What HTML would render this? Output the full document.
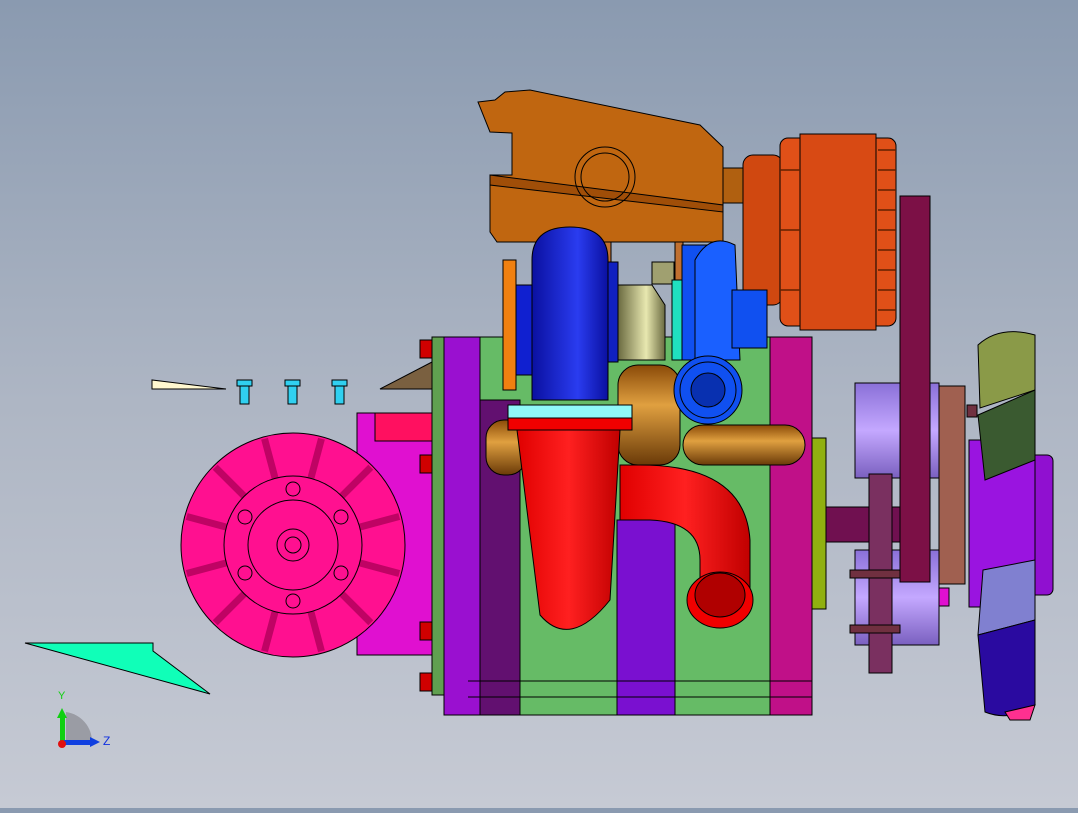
<!DOCTYPE html>
<html><head><style>html,body{margin:0;padding:0}body{width:1078px;height:808px;overflow:hidden;background:linear-gradient(#8a9ab0,#aeb6c4 50%,#c6cad4);font-family:"Liberation Sans",sans-serif}</style></head>
<body>
<svg width="1078" height="808" viewBox="0 0 1078 808" xmlns="http://www.w3.org/2000/svg" stroke="#000" stroke-width="1">
<defs>
<linearGradient id="bl" x1="0" x2="1"><stop offset="0" stop-color="#0a10a0"/><stop offset=".6" stop-color="#2a3cf0"/><stop offset="1" stop-color="#0a10a0"/></linearGradient>
<linearGradient id="rd" x1="0" x2="1"><stop offset="0" stop-color="#e00000"/><stop offset=".5" stop-color="#ff2020"/><stop offset="1" stop-color="#c00000"/></linearGradient>
<linearGradient id="br" x1="0" y1="0" x2="0" y2="1"><stop offset="0" stop-color="#8a4a08"/><stop offset=".4" stop-color="#e0a040"/><stop offset="1" stop-color="#6a3a08"/></linearGradient>
<linearGradient id="lv" x1="0" y1="0" x2="0" y2="1"><stop offset="0" stop-color="#8a70d8"/><stop offset=".5" stop-color="#c4a8ff"/><stop offset="1" stop-color="#7a60c0"/></linearGradient>
<linearGradient id="ol" x1="0" x2="1"><stop offset="0" stop-color="#6a6a40"/><stop offset=".6" stop-color="#e8e8b0"/><stop offset="1" stop-color="#6a6a40"/></linearGradient>
</defs>
<!-- small parts left -->
<polygon points="152,380 152,389 226,389" fill="#fff8d0"/>
<polygon points="380,389 432,362 432,389" fill="#7a6040"/>
<g fill="#30d0f0"><rect x="237" y="380" width="15" height="6"/><rect x="240" y="386" width="9" height="18"/><rect x="285" y="380" width="15" height="6"/><rect x="288" y="386" width="9" height="18"/><rect x="332" y="380" width="15" height="6"/><rect x="335" y="386" width="9" height="18"/></g>
<polygon points="25,643 153,643 153,651 210,694" fill="#10ffb8"/>
<!-- magenta box + pulley -->
<rect x="357" y="413" width="76" height="242" fill="#e010d0"/>
<rect x="375" y="413" width="58" height="28" fill="#ff1060"/>
<circle cx="293" cy="545" r="112" fill="#ff1090"/>
<g stroke="#b0005a" stroke-width="7" opacity=".8">
<line x1="293" y1="476" x2="293" y2="435" transform="rotate(15 293 545)"/><line x1="293" y1="476" x2="293" y2="435" transform="rotate(45 293 545)"/><line x1="293" y1="476" x2="293" y2="435" transform="rotate(75 293 545)"/><line x1="293" y1="476" x2="293" y2="435" transform="rotate(105 293 545)"/><line x1="293" y1="476" x2="293" y2="435" transform="rotate(135 293 545)"/><line x1="293" y1="476" x2="293" y2="435" transform="rotate(165 293 545)"/><line x1="293" y1="476" x2="293" y2="435" transform="rotate(195 293 545)"/><line x1="293" y1="476" x2="293" y2="435" transform="rotate(225 293 545)"/><line x1="293" y1="476" x2="293" y2="435" transform="rotate(255 293 545)"/><line x1="293" y1="476" x2="293" y2="435" transform="rotate(285 293 545)"/><line x1="293" y1="476" x2="293" y2="435" transform="rotate(315 293 545)"/><line x1="293" y1="476" x2="293" y2="435" transform="rotate(345 293 545)"/>
</g>
<circle cx="293" cy="545" r="69" fill="#ff1090"/>
<g fill="none"><circle cx="293" cy="545" r="45"/><circle cx="293" cy="545" r="16"/><circle cx="293" cy="545" r="8"/>
<circle cx="293" cy="489" r="7"/><circle cx="293" cy="601" r="7"/><circle cx="245" cy="517" r="7"/><circle cx="341" cy="517" r="7"/><circle cx="245" cy="573" r="7"/><circle cx="341" cy="573" r="7"/></g>
<!-- engine block -->
<rect x="468" y="337" width="344" height="378" fill="#66bb66"/>
<rect x="444" y="337" width="36" height="378" fill="#9a10d0"/>
<rect x="480" y="400" width="40" height="315" fill="#621070"/>
<rect x="617" y="520" width="58" height="195" fill="#7a10d0"/>
<rect x="770" y="337" width="42" height="378" fill="#c01088"/>
<rect x="812" y="438" width="14" height="171" fill="#90b010"/>
<rect x="432" y="337" width="12" height="358" fill="#60a050"/>
<line x1="468" y1="681" x2="812" y2="681"/><line x1="468" y1="697" x2="812" y2="697"/>
<g fill="#d00000"><rect x="420" y="340" width="12" height="18"/><rect x="420" y="455" width="12" height="18"/><rect x="420" y="622" width="12" height="18"/><rect x="420" y="673" width="12" height="18"/></g>
<!-- shaft, pulleys, belt -->
<rect x="826" y="507" width="80" height="35" fill="#701050"/>
<rect x="855" y="383" width="84" height="95" fill="url(#lv)"/>
<rect x="939" y="386" width="26" height="198" fill="#a06050"/>
<rect x="855" y="550" width="84" height="95" fill="url(#lv)"/>
<rect x="869" y="474" width="23" height="199" fill="#7a3060"/>
<rect x="900" y="196" width="30" height="386" fill="#7c1046"/>
<g fill="#703040"><rect x="850" y="570" width="50" height="8"/><rect x="850" y="625" width="50" height="8"/><rect x="967" y="405" width="10" height="12"/></g>
<rect x="939" y="588" width="10" height="18" fill="#e010d0"/>
<!-- fan -->
<rect x="1028" y="455" width="25" height="140" rx="6" fill="#9010d0"/>
<rect x="969" y="440" width="66" height="167" fill="#9a14e0"/>
<path d="M978,345 Q1000,325 1035,335 L1035,390 L980,408 Z" fill="#8a9a48"/>
<path d="M978,415 L1035,390 L1035,460 L985,480 Z" fill="#3a5a30"/>
<path d="M983,570 L1035,560 L1035,620 L978,635 Z" fill="#8080d0"/>
<path d="M978,635 L1035,620 L1035,705 Q1010,722 985,712 Z" fill="#2a0aa0"/>
<path d="M1005,712 L1035,705 L1030,720 L1010,720Z" fill="#ff3090"/>
<!-- intake manifold -->
<path d="M478,102 L495,100 L505,92 L530,90 L700,125 L723,147 L723,242 L497,242 L490,232 L490,175 L512,175 L512,133 L490,132 Z" fill="#c06610"/>
<path d="M490,175 L723,205 L723,212 L490,185 Z" fill="#a04e08"/>
<circle cx="605" cy="177" r="30" fill="none"/><circle cx="605" cy="177" r="24" fill="none"/>
<rect x="723" y="168" width="20" height="35" fill="#b06010"/>
<rect x="603" y="242" width="8" height="40" fill="#c07030"/><rect x="675" y="242" width="8" height="40" fill="#c07030"/>
<!-- alternator -->
<rect x="743" y="155" width="40" height="150" rx="10" fill="#d04810"/>
<rect x="780" y="138" width="116" height="188" rx="8" fill="#e05018"/>
<rect x="800" y="134" width="76" height="196" fill="#d84a14"/>
<g stroke="#602000" stroke-width="1.5"><line x1="878" y1="150" x2="896" y2="150"/><line x1="878" y1="170" x2="896" y2="170"/><line x1="878" y1="190" x2="896" y2="190"/><line x1="878" y1="210" x2="896" y2="210"/><line x1="878" y1="230" x2="896" y2="230"/><line x1="878" y1="250" x2="896" y2="250"/><line x1="878" y1="270" x2="896" y2="270"/><line x1="878" y1="290" x2="896" y2="290"/><line x1="878" y1="310" x2="896" y2="310"/><line x1="780" y1="170" x2="800" y2="170"/><line x1="780" y1="230" x2="800" y2="230"/><line x1="780" y1="290" x2="800" y2="290"/></g>
<!-- turbos -->
<rect x="503" y="260" width="13" height="130" fill="#f08010"/>
<rect x="516" y="285" width="20" height="90" fill="#1020d0"/>
<path d="M532,400 L532,260 Q532,227 570,227 Q608,227 608,260 L608,400 Z" fill="url(#bl)"/>
<rect x="608" y="262" width="10" height="100" fill="#1020c0"/>
<path d="M618,285 L652,285 L665,305 L665,360 L618,360 Z" fill="url(#ol)"/>
<rect x="652" y="262" width="22" height="22" fill="#a0a070"/>
<rect x="672" y="280" width="10" height="80" fill="#20e0c0"/>
<rect x="682" y="245" width="50" height="115" fill="#1050f0"/>
<path d="M695,360 L695,260 Q710,232 735,245 L740,360 Z" fill="#1a60ff"/>
<rect x="732" y="290" width="35" height="58" fill="#1050f0"/>
<!-- brown pipes -->
<rect x="618" y="365" width="62" height="100" rx="20" fill="url(#br)"/>
<rect x="486" y="420" width="40" height="55" rx="18" fill="url(#br)"/>
<rect x="683" y="425" width="122" height="40" rx="20" fill="url(#br)"/>
<circle cx="708" cy="390" r="34" fill="#1050f0"/><circle cx="708" cy="390" r="28" fill="none"/><circle cx="708" cy="390" r="17" fill="#0830b0"/>
<!-- exhaust -->
<rect x="508" y="405" width="124" height="13" fill="#90f8f8"/>
<rect x="508" y="418" width="124" height="12" fill="#f00000"/>
<path d="M620,465 L640,465 Q745,465 750,540 L750,600 L700,600 L700,560 Q700,522 650,520 L620,520 Z" fill="url(#rd)"/>
<ellipse cx="720" cy="600" rx="33" ry="28" fill="#f00000"/>
<ellipse cx="720" cy="595" rx="25" ry="22" fill="#b00000"/>
<path d="M517,430 L620,430 L610,600 Q570,650 540,615 Z" fill="url(#rd)"/>
<!-- axis -->
<g stroke="none"><path d="M66,712 A30,30 0 0 1 92,742 L66,742Z" fill="#9a9ca4"/><rect x="60" y="716" width="5" height="28" fill="#10d010"/><polygon points="62,708 57,718 67,718" fill="#10d010"/><rect x="64" y="740" width="28" height="5" fill="#1040e0"/><polygon points="100,742 90,737 90,747" fill="#1040e0"/><circle cx="62" cy="744" r="4" fill="#e01010"/></g>
<text x="58" y="699" font-size="11" fill="#10d010" stroke="none">Y</text>
<text x="103" y="745" font-size="12" fill="#1030e0" stroke="none">Z</text>
</svg>
</body></html>
